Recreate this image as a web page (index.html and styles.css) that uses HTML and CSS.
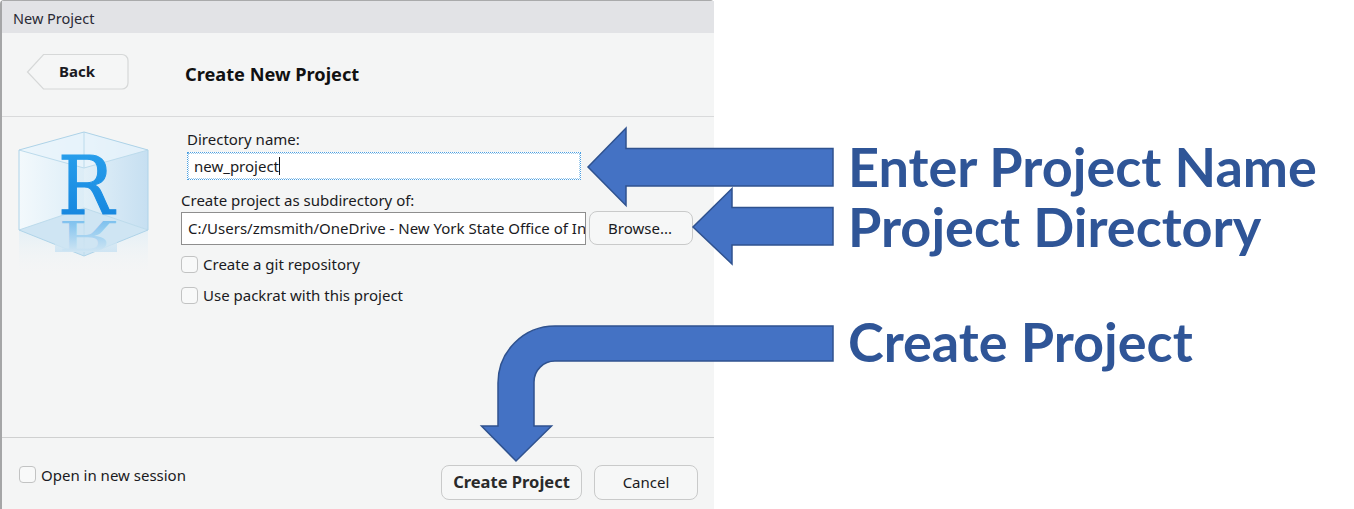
FILE: index.html
```html
<!DOCTYPE html>
<html lang="en">
<head>
    <meta charset="UTF-8">
    <meta name="viewport" content="width=device-width, initial-scale=1.0">
    <title>New Project</title>
    <link rel="stylesheet" href="styles.css">
</head>
<body>
    <div class="page">
        <div class="dialog">
            <div class="title-bar">New Project</div>
            <div class="wizard-head">
                <button class="back-btn">
                    <svg class="back-shape" width="104" height="38" viewBox="0 0 104 38">
                        <path d="M17.5 1.5H96a6 6 0 0 1 6 6V30a6 6 0 0 1-6 6H17.5L1.5 19Z" fill="#f5f6f6" stroke="#d6d8d8" stroke-width="1.2"/>
                    </svg>
                    <span class="back-label">Back</span>
                </button>
                <h1 class="wizard-title">Create New Project</h1>
            </div>
            <div class="wizard-body">
                <svg class="logo" width="134" height="160" viewBox="0 0 134 160">
                    <defs>
                        <linearGradient id="leftFace" x1="0" y1="0" x2="1" y2="0">
                            <stop offset="0" stop-color="#f3f9fc"/>
                            <stop offset="1" stop-color="#dcedf7"/>
                        </linearGradient>
                        <linearGradient id="rightFace" x1="0" y1="0" x2="1" y2="0">
                            <stop offset="0" stop-color="#e2f0f8"/>
                            <stop offset="1" stop-color="#c6dff1"/>
                        </linearGradient>
                        <linearGradient id="letter" x1="0" y1="0" x2="0" y2="1">
                            <stop offset="0" stop-color="#2ba3ee"/>
                            <stop offset="1" stop-color="#1281dc"/>
                        </linearGradient>
                        <linearGradient id="fade" x1="0" y1="0" x2="0" y2="1">
                            <stop offset="0" stop-color="#e3eff6" stop-opacity="0.9"/>
                            <stop offset="1" stop-color="#f4f5f5" stop-opacity="0"/>
                        </linearGradient>
                        <linearGradient id="letterFade" x1="0" y1="0" x2="0" y2="1">
                            <stop offset="0" stop-color="#cfe5f3" stop-opacity="0"/>
                            <stop offset="1" stop-color="#cfe5f3" stop-opacity="1"/>
                        </linearGradient>
                    </defs>
                    <path d="M2 113L67 139V160H2Z" fill="url(#fade)"/>
                    <path d="M67 139L131 113V160H67Z" fill="url(#fade)"/>
                    <path d="M2 33L67 15V91L2 113Z" fill="url(#leftFace)"/>
                    <path d="M67 15L131 33V113L67 91Z" fill="url(#rightFace)"/>
                    <path d="M2 113L67 91L131 113L67 139Z" fill="#cfe5f3"/>
                    <path d="M2 33L67 15L131 33L67 51Z" fill="#e8f4fb" opacity="0.8"/>
                    <path d="M2 33L67 51L131 33M67 15V51M67 91V139M2 113L67 91L131 113" fill="none" stroke="#bcdbec" stroke-width="1"/>
                    <path d="M2 33L67 15L131 33V113L67 139L2 113Z" fill="none" stroke="#aed3e8" stroke-width="1"/>
                    <text class="logo-r" x="41" y="97" textLength="56" lengthAdjust="spacingAndGlyphs" fill="url(#letter)" stroke="url(#letter)">R</text>
                    <text class="logo-r" x="41" y="-208" textLength="56" lengthAdjust="spacingAndGlyphs" fill="#7cc0ee" transform="scale(1 -0.5)">R</text>
                    <rect x="38" y="103" width="62" height="32" fill="url(#letterFade)"/>
                </svg>
                <div class="form">
                    <label class="field-label field-label-inset">Directory name:</label>
                    <div class="name-input">new_project<span class="caret"></span></div>
                    <label class="field-label field-label-path">Create project as subdirectory of:</label>
                    <div class="path-row">
                        <div class="path-input">C:/Users/zmsmith/OneDrive - New York State Office of In</div>
                        <button class="btn browse-btn">Browse...</button>
                    </div>
                    <label class="check-row check-row-git"><span class="check"></span>Create a git repository</label>
                    <label class="check-row check-row-packrat"><span class="check"></span>Use packrat with this project</label>
                </div>
            </div>
            <div class="wizard-foot">
                <label class="check-row"><span class="check"></span>Open in new session</label>
                <div class="foot-buttons">
                    <button class="btn create-btn">Create Project</button>
                    <button class="btn cancel-btn">Cancel</button>
                </div>
            </div>
        </div>
        <div class="notes">
            <div class="note note-name">Enter Project Name</div>
            <div class="note note-dir">Project Directory</div>
            <div class="note note-create">Create Project</div>
        </div>
        <svg class="arrows" width="1354" height="509" viewBox="0 0 1354 509">
            <g fill="#4472c4" stroke="#2f528f" stroke-width="1.5">
                <path d="M833 148.500H626V128L588 167L626 205.500V186H833Z"/>
                <path d="M833 207.500H732V188.500L693 227L732 264V245H833Z"/>
                <path d="M833 326H555A57 57 0 0 0 498 383V426H481.500L516 461L551.500 426H534V382A21 21 0 0 1 555 361H833Z"/>
            </g>
        </svg>
    </div>
</body>
</html>
```

FILE: styles.css
```css
body, html {
    margin: 0;
    padding: 0;
    background-color: #fff;
    font-family: "Noto Sans", "Open Sans", sans-serif;
}

.page {
    position: relative;
    display: flex;
    width: 1354px;
    height: 509px;
    overflow: hidden;
}

.dialog {
    display: flex;
    flex-direction: column;
    width: 714px;
    height: 509px;
    box-sizing: border-box;
    flex-shrink: 0;
    border-left: 2px solid #a5a6a7;
    border-top: 1px solid #a9aaab;
    border-top-left-radius: 4px;
    border-top-right-radius: 4px;
    background-color: #f4f5f5;
    color: #1a1a22;
}

.title-bar {
    height: 32px;
    box-sizing: border-box;
    padding: 8px 0 0 11px;
    background-color: #e2e3e6;
    font-size: 14.500px;
    line-height: 18px;
    color: #2a2a35;
}

.wizard-head {
    display: flex;
    align-items: center;
    height: 84px;
    box-sizing: border-box;
    padding: 0 0 0 24px;
    border-bottom: 1px solid #d9dadb;
}

.back-btn {
    display: flex;
    position: relative;
    align-items: center;
    justify-content: center;
    width: 104px;
    height: 38px;
    margin-top: -5px;
    padding: 0 2px 2px 0;
    border: none;
    background: none;
    font-family: inherit;
    font-size: 15px;
    font-weight: 700;
    color: #1a1a22;
}

.back-shape {
    position: absolute;
    left: 0;
    top: 0;
}

.back-label {
    position: relative;
}

.wizard-title {
    margin: -1px 0 0 55px;
    font-size: 18.200px;
    font-weight: 700;
    color: #111;
}

.wizard-body {
    display: flex;
    flex: 1;
    min-height: 0;
    padding: 0 0 0 15px;
}

.logo {
    flex-shrink: 0;
}

.logo-r {
    font-family: "DejaVu Serif", serif;
    font-size: 81px;
    font-weight: 400;
    stroke-width: 1.2px;
}

.form {
    display: flex;
    flex-direction: column;
    align-items: flex-start;
    margin-left: 30px;
    padding-top: 12px;
}

.field-label {
    font-size: 15px;
    line-height: 20px;
    color: #1a1a22;
}

.field-label-inset {
    margin: 0 0 0 6px;
}

.name-input {
    display: flex;
    align-items: center;
    width: 394px;
    height: 28px;
    margin: 3px 0 0 6px;
    box-sizing: border-box;
    padding: 0 0 0 6px;
    border: 1px dotted #4c9fe0;
    outline: 1px dotted #9fcbec;
    outline-offset: -2px;
    background-color: #fff;
    font-size: 15px;
}

.caret {
    width: 1px;
    height: 18px;
    background-color: #111;
}

.field-label-path {
    margin-top: 10px;
}

.path-row {
    display: flex;
    align-items: center;
    gap: 3px;
    margin-top: 1px;
}

.path-input {
    width: 405px;
    height: 33px;
    box-sizing: border-box;
    padding: 0 0 0 6px;
    border: 1px solid #8e8e8e;
    background-color: #fff;
    overflow: hidden;
    white-space: nowrap;
    font-size: 15px;
    line-height: 31px;
}

.btn {
    box-sizing: border-box;
    border: 1.500px solid #c9caca;
    border-radius: 8px;
    background-color: #f6f7f7;
    font-family: inherit;
    font-size: 15px;
    color: #1a1a22;
}

.browse-btn {
    width: 104px;
    height: 34px;
    padding: 0 2px 1px 0;
}

.check-row {
    display: flex;
    align-items: center;
    gap: 5px;
    font-size: 15px;
    line-height: 18px;
    color: #1a1a22;
}

.check-row-git {
    margin-top: 10px;
}

.check-row-packrat {
    margin-top: 13px;
}

.check {
    width: 17px;
    height: 17px;
    box-sizing: border-box;
    border: 1.500px solid #c2c3c3;
    border-radius: 4px;
    background-color: #f8f9f9;
}

.wizard-foot {
    display: flex;
    align-items: center;
    justify-content: space-between;
    height: 72px;
    box-sizing: border-box;
    padding: 2px 16px 0 17px;
    border-top: 1px solid #cfd0d0;
}

.foot-buttons {
    display: flex;
    gap: 12px;
    margin-top: 15px;
}

.create-btn {
    width: 141px;
    height: 35px;
    padding: 0 0 1px;
    font-size: 16.500px;
    font-weight: 700;
    color: #2a2a2a;
}

.cancel-btn {
    width: 104px;
    height: 35px;
}

.notes {
    display: flex;
    flex-direction: column;
    padding: 137px 0 0 134px;
    font-family: Lato, "Noto Sans", sans-serif;
    font-size: 54px;
    font-weight: 700;
    line-height: 60px;
    color: #2f5597;
    white-space: nowrap;
}

.note-create {
    margin-top: 55px;
}

.arrows {
    position: absolute;
    left: 0;
    top: 0;
    pointer-events: none;
}
```
